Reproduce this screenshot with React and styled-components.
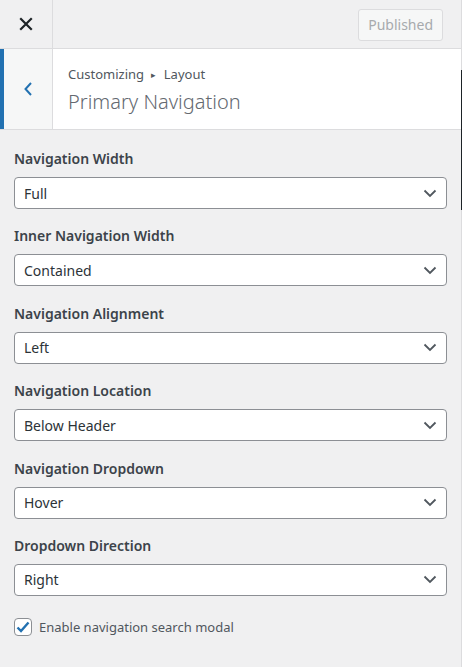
import React from "react";
import styled, { createGlobalStyle } from "styled-components";

const GlobalStyle = createGlobalStyle`
  html, body {
    margin: 0;
    padding: 0;
    background: #f0f0f1;
    font-family: "Noto Sans", "Open Sans", sans-serif;
  }
`;

const fields = [
  { label: "Navigation Width", value: "Full" },
  { label: "Inner Navigation Width", value: "Contained" },
  { label: "Navigation Alignment", value: "Left" },
  { label: "Navigation Location", value: "Below Header" },
  { label: "Navigation Dropdown", value: "Hover" },
  { label: "Dropdown Direction", value: "Right" },
];

function App() {
  return (
    <>
      <GlobalStyle />
      <Panel>
        <TopBar>
          <CloseButton aria-label="Close">
            <svg width="14" height="14" viewBox="0 0 14 14">
              <path d="M2 2 L12 12 M12 2 L2 12" stroke="#1d2327" strokeWidth="2.2" strokeLinecap="square" />
            </svg>
          </CloseButton>
          <TopActions>
            <PublishedButton disabled>Published</PublishedButton>
          </TopActions>
        </TopBar>
        <SectionHeader>
          <BackButton aria-label="Back">
            <svg width="10" height="16" viewBox="0 0 10 16">
              <path d="M8 2 L2.5 8 L8 14" fill="none" stroke="#2271b1" strokeWidth="2" />
            </svg>
          </BackButton>
          <SectionTitle>
            <Crumbs>
              Customizing <Arrow>▸</Arrow> Layout
            </Crumbs>
            <Heading>Primary Navigation</Heading>
          </SectionTitle>
        </SectionHeader>
        <Controls>
          {fields.map((f) => (
            <Control key={f.label}>
              <Label>{f.label}</Label>
              <Select>
                <span>{f.value}</span>
                <svg width="14" height="9" viewBox="0 0 14 9">
                  <path d="M1.5 1.5 L7 7 L12.5 1.5" fill="none" stroke="#50575e" strokeWidth="1.8" />
                </svg>
              </Select>
            </Control>
          ))}
          <CheckRow>
            <CheckBox>
              <svg width="14" height="12" viewBox="0 0 14 12">
                <path d="M1.5 6.5 L5 10 L12.5 1.5" fill="none" stroke="#2271b1" strokeWidth="2.4" />
              </svg>
            </CheckBox>
            <CheckLabel>Enable navigation search modal</CheckLabel>
          </CheckRow>
        </Controls>
        <ScrollThumb />
      </Panel>
    </>
  );
}

const Panel = styled.div`
  position: relative;
  width: 461px;
  min-height: 667px;
  border-right: 1px solid #dcdcde;
  background: #f0f0f1;
`;

const ScrollThumb = styled.div`
  position: absolute;
  right: -1px;
  top: 70px;
  width: 1px;
  height: 140px;
  background: #1d2327;
`;

const TopBar = styled.div`
  display: flex;
  height: 48px;
  border-bottom: 1px solid #dcdcde;
  background: #f0f0f1;
`;

const CloseButton = styled.div`
  width: 52px;
  display: flex;
  align-items: center;
  justify-content: center;
  border-right: 1px solid #dcdcde;
`;

const TopActions = styled.div`
  flex: 1;
  display: flex;
  align-items: center;
  justify-content: flex-end;
  padding-right: 18px;
`;

const PublishedButton = styled.button`
  height: 32px;
  padding: 0 9px;
  border: 1px solid #dcdcde;
  border-radius: 3px;
  background: #f6f7f7;
  color: #a7aaad;
  font-family: inherit;
  font-size: 14px;
  margin-top: 1px;
`;

const SectionHeader = styled.div`
  display: flex;
  height: 80px;
  background: #fff;
  border-bottom: 1px solid #dcdcde;
`;

const BackButton = styled.div`
  width: 48px;
  border-left: 4px solid #2271b1;
  border-right: 1px solid #dcdcde;
  background: #f6f7f7;
  display: flex;
  align-items: center;
  justify-content: center;
`;

const SectionTitle = styled.div`
  display: flex;
  flex-direction: column;
  justify-content: center;
  padding-left: 15px;
  padding-top: 2px;
`;

const Crumbs = styled.div`
  font-size: 13px;
  color: #50575e;
  line-height: 20px;
`;

const Arrow = styled.span`
  font-size: 9px;
  margin: 0 4px;
  vertical-align: 1px;
`;

const Heading = styled.div`
  font-size: 20px;
  font-weight: 300;
  color: #646970;
  line-height: 30px;
  margin-top: 2px;
`;

const Controls = styled.div`
  padding: 19px 14px 0 14px;
  display: flex;
  flex-direction: column;
  gap: 17.4px;
`;

const Control = styled.div`
  display: flex;
  flex-direction: column;
`;

const Label = styled.div`
  font-size: 14px;
  font-weight: 600;
  color: #3c434a;
  line-height: 20px;
  margin-bottom: 8px;
`;

const Select = styled.div`
  height: 30px;
  border: 1px solid #8c8f94;
  border-radius: 4px;
  background: #fff;
  display: flex;
  align-items: center;
  justify-content: space-between;
  padding: 0 9px 0 9px;
  font-size: 14px;
  color: #2c3338;
`;

const CheckRow = styled.div`
  display: flex;
  align-items: center;
  gap: 7px;
  margin-top: 5px;
`;

const CheckBox = styled.div`
  width: 16px;
  height: 16px;
  border: 1px solid #8c8f94;
  border-radius: 4px;
  background: #fff;
  display: flex;
  align-items: center;
  justify-content: center;
`;

const CheckLabel = styled.div`
  font-size: 13px;
  color: #50575e;
`;

export default App;
